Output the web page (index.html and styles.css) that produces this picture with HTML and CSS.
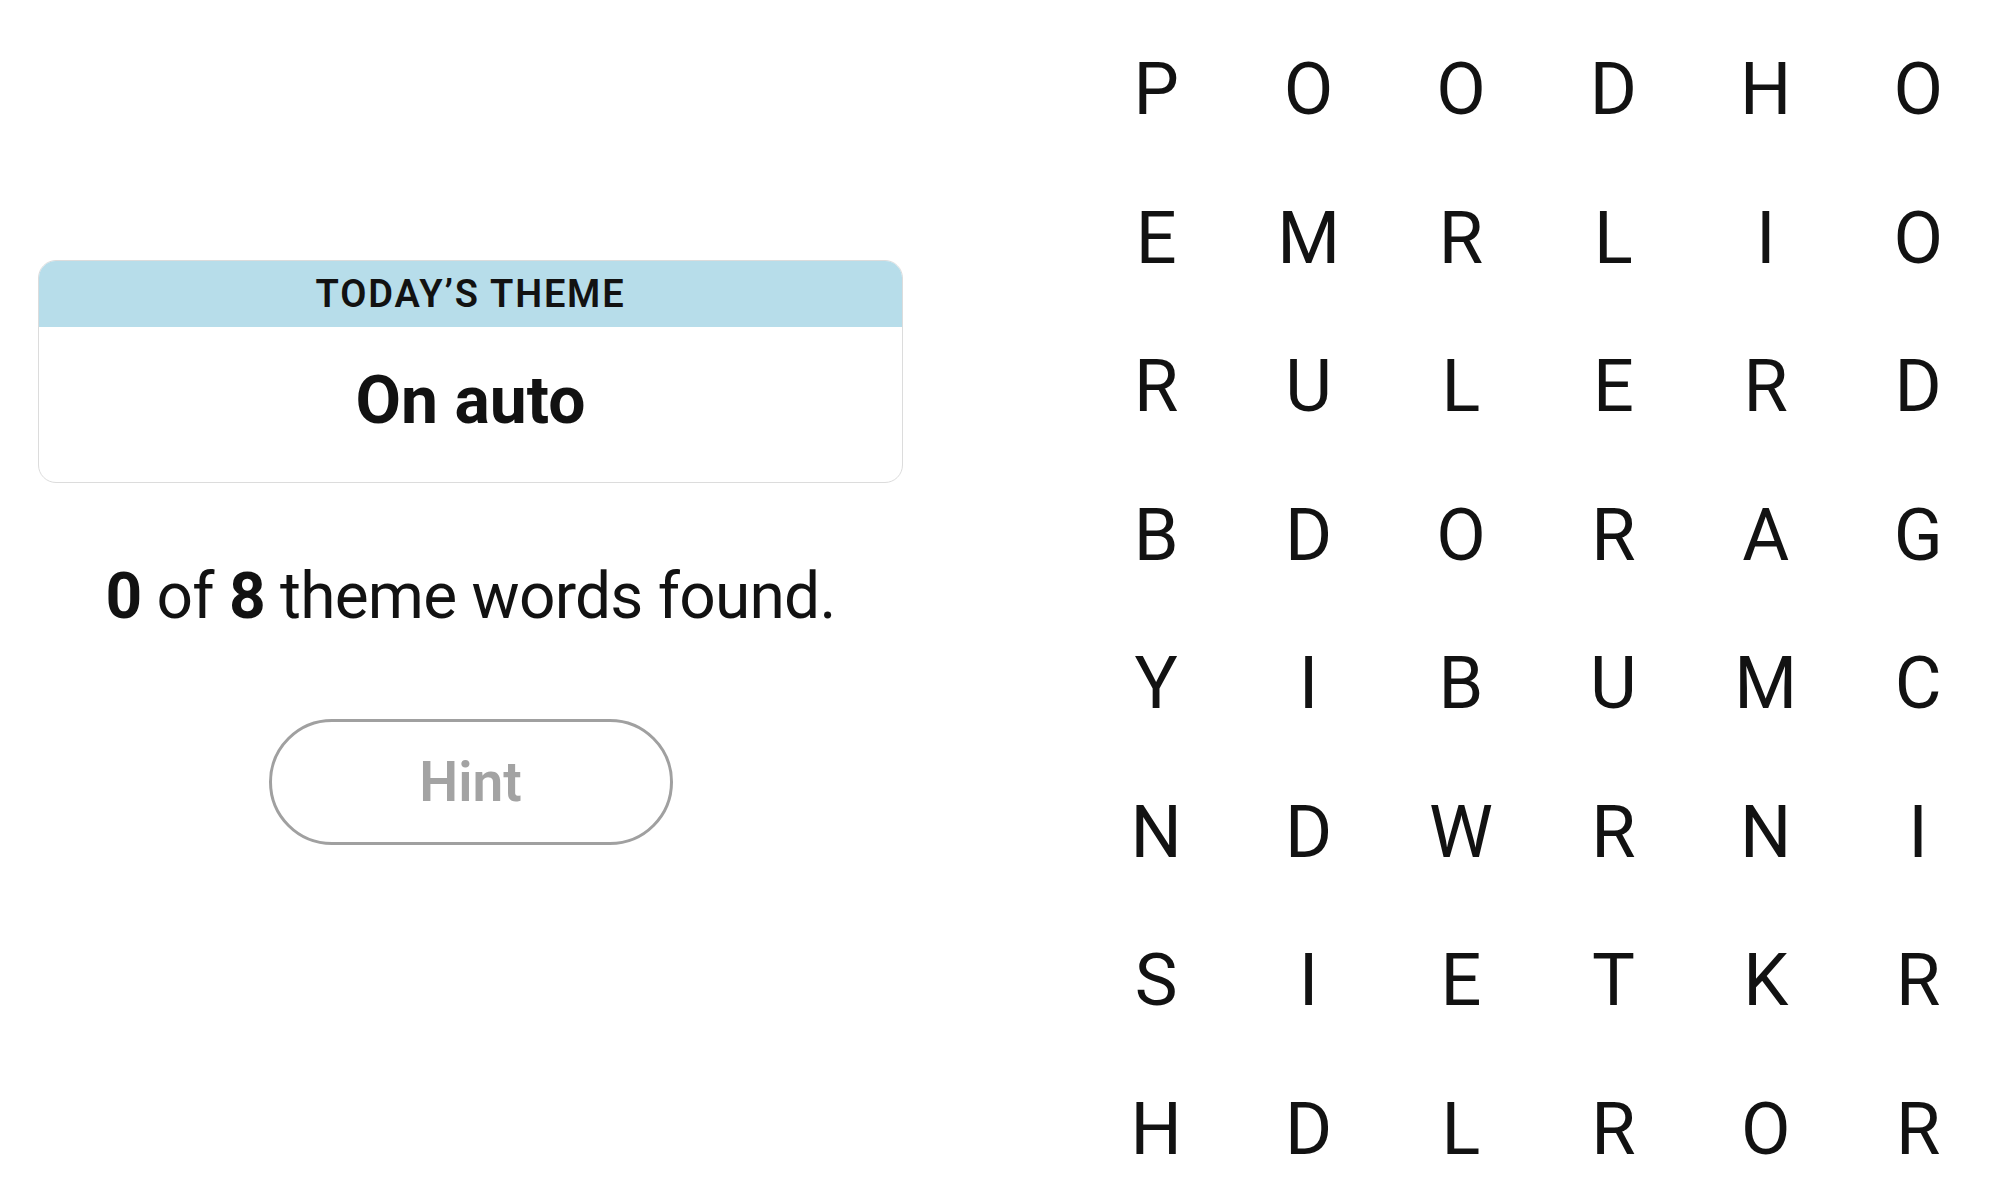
FILE: index.html
```html
<!DOCTYPE html>
<html lang="en">
<head>
<meta charset="utf-8">
<title>Strands</title>
<link rel="stylesheet" href="styles.css">
</head>
<body>
<main class="page">
  <section class="side">
    <div class="theme-card">
      <div class="theme-head">TODAY’S THEME</div>
      <div class="theme-body">On auto</div>
    </div>
    <p class="count"><b>0</b> of <b>8</b> theme words found.</p>
    <button class="hint" type="button">Hint</button>
  </section>
  <section class="board">
    <span>P</span><span>O</span><span>O</span><span>D</span><span>H</span><span>O</span>
    <span>E</span><span>M</span><span>R</span><span>L</span><span>I</span><span>O</span>
    <span>R</span><span>U</span><span>L</span><span>E</span><span>R</span><span>D</span>
    <span>B</span><span>D</span><span>O</span><span>R</span><span>A</span><span>G</span>
    <span>Y</span><span>I</span><span>B</span><span>U</span><span>M</span><span>C</span>
    <span>N</span><span>D</span><span>W</span><span>R</span><span>N</span><span>I</span>
    <span>S</span><span>I</span><span>E</span><span>T</span><span>K</span><span>R</span>
    <span>H</span><span>D</span><span>L</span><span>R</span><span>O</span><span>R</span>
  </section>
</main>
</body>
</html>
```

FILE: styles.css
```css
html, body {
  margin: 0;
  padding: 0;
  height: 100%;
  overflow: hidden;
  background: #ffffff;
}

body {
  font-family: Roboto, "Liberation Sans", Arial, sans-serif;
  color: #121212;
}

.page {
  display: flex;
  align-items: flex-start;
}

.side {
  width: 865px;
  margin-left: 38px;
  padding-top: 260px;
  display: flex;
  flex-direction: column;
  align-items: center;
}

.theme-card {
  width: 100%;
  box-sizing: border-box;
  border: 1px solid #dcdcdc;
  border-radius: 18px;
  overflow: hidden;
}

.theme-head {
  height: 67px;
  background: #b7ddea;
  display: flex;
  align-items: center;
  justify-content: center;
  font-size: 38px;
  font-weight: 600;
  letter-spacing: 1.8px;
  margin: -1px -1px 0;
}

.theme-body {
  height: 155px;
  display: flex;
  align-items: center;
  justify-content: center;
  font-size: 66px;
  font-weight: 700;
  padding-bottom: 8px;
  box-sizing: border-box;
}

.count {
  margin: 76px 0 0;
  font-size: 64px;
  line-height: 1.2;
  font-weight: 400;
  letter-spacing: -0.75px;
}

.count b {
  font-weight: 700;
}

.hint {
  margin-top: 83px;
  width: 404px;
  height: 126px;
  border: 3px solid #a0a0a0;
  border-radius: 63px;
  background: #ffffff;
  color: #a3a3a3;
  font-family: Roboto, "Liberation Sans", Arial, sans-serif;
  font-size: 55px;
  font-weight: 600;
  padding: 0;
}

.board {
  margin-left: 177px;
  margin-top: 16px;
  display: grid;
  grid-template-columns: repeat(6, 152.4px);
  grid-template-rows: repeat(8, 148.5px);
}

.board span {
  display: flex;
  align-items: center;
  justify-content: center;
  font-size: 72px;
  line-height: 148.5px;
  font-weight: 400;
}
```
